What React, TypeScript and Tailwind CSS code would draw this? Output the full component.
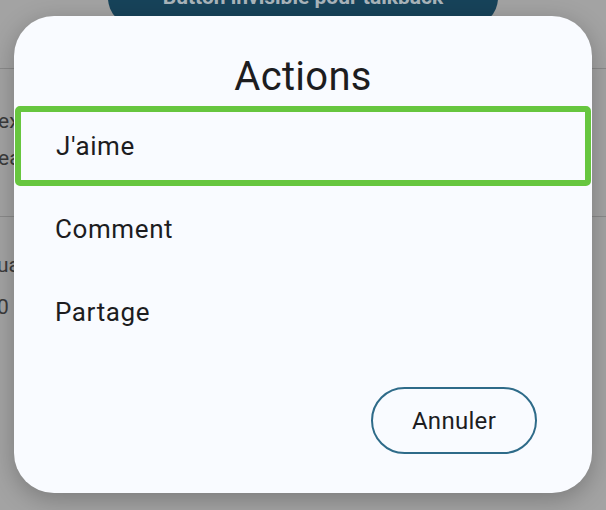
import React from "react";

const items = ["J'aime", "Comment", "Partage"];

function Backdrop() {
  return (
    <div className="flex h-full w-full flex-col bg-[#a3a3a3] text-[#3b3b3b]">
      <div className="flex justify-center">
        <div className="-mt-[30px] flex h-[56px] w-[390px] items-center justify-center rounded-full bg-[#17435a] text-[21px] font-bold text-[#a9b4ba]">
          Button invisible pour talkback
        </div>
      </div>
      <div className="mt-[42px] h-px w-full bg-[#8a8a8a]" />
      <div className="-ml-[2px] mt-[40px] flex flex-col gap-[12px] text-[21px] leading-[25px]">
        <span>ex</span>
        <span>ea</span>
      </div>
      <div className="mt-[45px] h-px w-full bg-[#8a8a8a]" />
      <div className="-ml-[3px] mt-[36px] flex flex-col gap-[17px] text-[21px] leading-[25px]">
        <span>ua</span>
        <span>0</span>
      </div>
    </div>
  );
}

export default function App() {
  return (
    <div
      className="relative h-[510px] w-[606px] overflow-hidden"
      style={{ fontFamily: "Roboto, 'Open Sans', sans-serif" }}
    >
      <Backdrop />
      <div className="absolute left-[14px] top-[16px] flex h-[477px] w-[578px] flex-col rounded-[40px] bg-[#f9fbff] shadow-[0_6px_24px_rgba(0,0,0,0.25)]">
        <h2 className="mt-[38px] text-center text-[40px] leading-[46px] tracking-[0.3px] text-[#1d1d1f]">
          Actions
        </h2>
        <ul className="mt-[6px] flex flex-col">
          {items.map((item, i) => (
            <li
              key={item}
              className={
                i === 0
                  ? "mx-px flex h-[80px] items-center rounded-[5px] border-[6px] border-[#67c63f] pl-[35px] text-[26px] tracking-[0.6px] text-[#1d1d1f]"
                  : "mt-[3px] flex h-[80px] items-center pl-[41px] text-[26px] tracking-[0.6px] text-[#1d1d1f]"
              }
            >
              {item}
            </li>
          ))}
        </ul>
        <div className="mt-[35px] flex justify-end pr-[55px]">
          <button className="flex h-[67px] w-[166px] items-center justify-center rounded-full border-2 border-[#2e6b89] text-[24px] tracking-[0.3px] text-[#1d1d1f]">
            Annuler
          </button>
        </div>
      </div>
    </div>
  );
}
